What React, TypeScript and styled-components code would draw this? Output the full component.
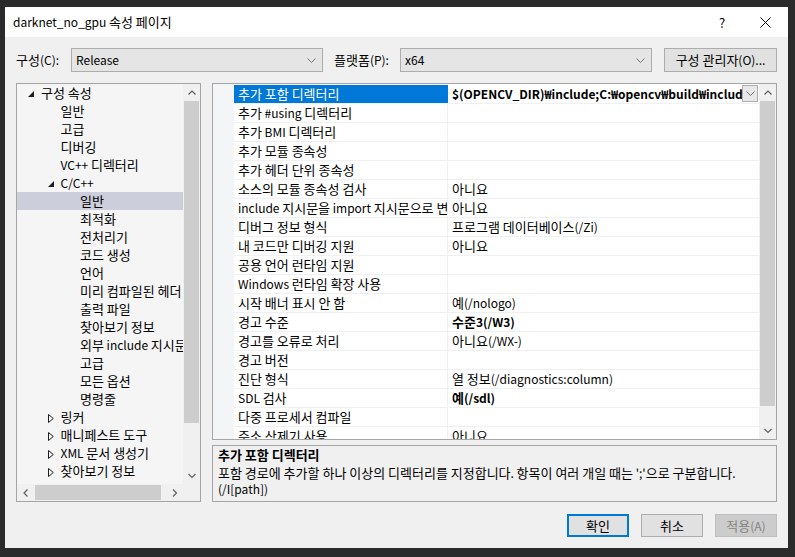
import React from "react";
import styled, { createGlobalStyle, css } from "styled-components";

const FONT = `"Noto Sans CJK KR", "Noto Sans", sans-serif`;

const GlobalStyle = createGlobalStyle`
  html, body { margin: 0; padding: 0; background: #2b2b2b; }
  body { font-family: ${FONT}; font-size: 12px; color: #000; }
  * { box-sizing: border-box; }
`;

const Hangul = styled.span`
  font-size: 1.0834em;
`;

const HANGUL_RUN = /([\u1100-\u11FF\u3130-\u318F\uAC00-\uD7AF]+(?: +[\u1100-\u11FF\u3130-\u318F\uAC00-\uD7AF]+)*)/;

const T = ({ children }: { children: string }) => {
  const parts = children.split(HANGUL_RUN);
  return (
    <span>
      {parts.map((part, i) =>
        i % 2 === 1 ? <Hangul key={i}>{part}</Hangul> : <React.Fragment key={i}>{part}</React.Fragment>
      )}
    </span>
  );
};

const Screen = styled.div`
  width: 795px;
  height: 557px;
  padding: 7px 7px 9px 5px;
  background: #2b2b2b;
`;

const Dialog = styled.div`
  width: 783px;
  height: 541px;
  display: flex;
  flex-direction: column;
  background: #f0f0f0;
`;

const TitleBar = styled.div`
  height: 30px;
  flex: none;
  background: #ffffff;
  display: flex;
  align-items: center;
  padding-left: 8px;
`;

const TitleText = styled.div`
  flex: 1;
  font-size: 12px;
  line-height: 16px;
  white-space: nowrap;
`;

const TitleButton = styled.div<{ $shift?: number }>`
  width: 46px;
  height: 30px;
  display: flex;
  align-items: center;
  justify-content: center;
  padding-left: ${(p) => p.$shift ?? 0}px;
  font-size: 13px;
  color: #000;
`;

const Body = styled.div`
  flex: 1;
  display: flex;
  flex-direction: column;
  padding: 11px 11px 11px 11px;
`;

const ToolbarRow = styled.div`
  height: 24px;
  display: flex;
  align-items: center;
  flex: none;
`;

const Label = styled.div<{ $width: number; $gap?: number }>`
  width: ${(p) => p.$width}px;
  margin-left: ${(p) => p.$gap ?? 0}px;
  white-space: nowrap;
  line-height: 16px;
`;

const Combo = styled.div`
  width: 252px;
  height: 24px;
  border: 1px solid #adadad;
  background: #e5e5e5;
  display: flex;
  align-items: center;
  padding-left: 4px;
  padding-right: 6px;
`;

const ComboText = styled.div`
  flex: 1;
  line-height: 16px;
`;

const PushButton = styled.div`
  width: 113px;
  height: 24px;
  margin-left: 12px;
  border: 1px solid #adadad;
  background: #e1e1e1;
  display: flex;
  align-items: center;
  justify-content: center;
  line-height: 16px;
  white-space: nowrap;
`;

const MainArea = styled.div`
  margin-top: 11px;
  height: 419px;
  display: flex;
  gap: 11px;
  flex: none;
`;

const TreePanel = styled.div`
  width: 185px;
  height: 419px;
  border: 1px solid #a5a5a5;
  background: #f5f5f5;
  display: grid;
  grid-template-columns: 166px 17px;
  grid-template-rows: 400px 17px;
`;

const TreeContent = styled.div`
  overflow: hidden;
`;

const TreeRow = styled.div<{ $level: number; $selected?: boolean }>`
  height: 18px;
  display: flex;
  align-items: center;
  padding-left: ${(p) => 11 + p.$level * 19.5}px;
  white-space: nowrap;
  line-height: 16px;
  ${(p) =>
    p.$selected &&
    css`
      background: #cccedb;
    `}
`;

const Expander = styled.div`
  width: 13px;
  flex: none;
  display: flex;
  align-items: center;
  padding-top: 2px;
`;

const Corner = styled.div`
  background: #f0f0f0;
`;

const VScroll = styled.div`
  background: #f0f0f0;
  display: flex;
  flex-direction: column;
  align-items: center;
`;

const HScroll = styled.div`
  background: #f0f0f0;
  display: flex;
  align-items: center;
`;

const ArrowBox = styled.div`
  width: 17px;
  height: 17px;
  flex: none;
  display: flex;
  align-items: center;
  justify-content: center;
`;

const VTrack = styled.div`
  flex: 1;
  width: 100%;
  display: flex;
  flex-direction: column;
  align-items: center;
`;

const HTrack = styled.div`
  flex: 1;
  height: 100%;
  display: flex;
  align-items: center;
`;

const VThumb = styled.div<{ $len: number }>`
  width: 15px;
  height: ${(p) => p.$len}px;
  background: #cdcdcd;
`;

const HThumb = styled.div<{ $len: number }>`
  height: 15px;
  width: ${(p) => p.$len}px;
  margin-left: 1px;
  background: #cdcdcd;
`;

const RightColumn = styled.div`
  flex: 1;
  display: flex;
  flex-direction: column;
  gap: 5px;
`;

const PropertyGrid = styled.div`
  height: 357px;
  border: 1px solid #a5a5a5;
  background: #ffffff;
  display: flex;
  flex: none;
`;

const Gutter = styled.div`
  width: 21px;
  flex: none;
  background: #f4f5f7;
`;

const Rows = styled.div`
  flex: 1;
  overflow: hidden;
  padding-top: 1px;
`;

const PropRow = styled.div`
  display: grid;
  grid-template-columns: 214px 1fr;
  height: 19px;
  border-bottom: 1px solid #eff0f2;
`;

const NameCell = styled.div<{ $selected?: boolean }>`
  padding-left: 4px;
  border-right: 1px solid #eff0f2;
  white-space: nowrap;
  overflow: hidden;
  line-height: 18px;
  ${(p) =>
    p.$selected &&
    css`
      background: #0078d7;
      color: #ffffff;
      border-right-color: #0078d7;
    `}
`;

const ValueCell = styled.div`
  display: flex;
  align-items: flex-start;
  padding-left: 4px;
  min-width: 0;
`;

const ValueText = styled.div<{ $bold?: boolean }>`
  flex: 1;
  min-width: 0;
  white-space: nowrap;
  overflow: hidden;
  line-height: 18px;
  font-weight: ${(p) => (p.$bold ? 700 : 400)};
`;

const ValueDrop = styled.div`
  width: 16px;
  height: 17px;
  flex: none;
  margin-right: 1px;
  border: 1px solid #adadad;
  background: #e8e8e8;
  display: flex;
  align-items: center;
  justify-content: center;
`;

const DescPanel = styled.div`
  height: 57px;
  border: 1px solid #a5a5a5;
  background: #f0f0f0;
  padding: 1px 5px 0 5px;
  line-height: 16.5px;
`;

const DescTitle = styled.div`
  font-weight: 700;
  margin-bottom: 1px;
`;

const FooterRow = styled.div`
  margin-top: 12px;
  height: 23px;
  display: flex;
  justify-content: flex-end;
  gap: 12px;
`;

const DialogButton = styled.div<{ $variant?: "default" | "normal" | "disabled" }>`
  width: 62px;
  height: 23px;
  display: flex;
  align-items: center;
  justify-content: center;
  line-height: 16px;
  background: #e1e1e1;
  border: 1px solid #adadad;
  ${(p) =>
    p.$variant === "default" &&
    css`
      border: 2px solid #0078d7;
    `}
  ${(p) =>
    p.$variant === "disabled" &&
    css`
      background: #cccccc;
      border-color: #bfbfbf;
      color: #838383;
    `}
`;

const Chevron = ({ dir, color = "#606060" }: { dir: "up" | "down" | "left" | "right"; color?: string }) => {
  const pts: Record<string, string> = {
    up: "0.5,4.5 4,1 7.5,4.5",
    down: "0.5,1 4,4.5 7.5,1",
    left: "4.5,0.5 1,4 4.5,7.5",
    right: "1,0.5 4.5,4 1,7.5",
  };
  const vertical = dir === "up" || dir === "down";
  return (
    <svg width={vertical ? 8 : 6} height={vertical ? 6 : 8} viewBox={vertical ? "0 0 8 6" : "0 0 6 8"}>
      <polyline points={pts[dir]} fill="none" stroke={color} strokeWidth="1.2" />
    </svg>
  );
};

const ComboArrow = () => (
  <svg width="9" height="5" viewBox="0 0 9 5">
    <polyline points="0.5,0.5 4.5,4.5 8.5,0.5" fill="none" stroke="#707070" strokeWidth="1" />
  </svg>
);

const ExpandedIcon = () => (
  <svg width="6" height="6" viewBox="0 0 6 6">
    <polygon points="6,0 6,6 0,6" fill="#1e1e1e" />
  </svg>
);

const CollapsedIcon = () => (
  <svg width="6" height="9" viewBox="0 0 6 9">
    <polygon points="0.5,0.5 5.3,4.5 0.5,8.5" fill="none" stroke="#1e1e1e" strokeWidth="1" />
  </svg>
);

const CloseIcon = () => (
  <svg width="11" height="11" viewBox="0 0 11 11">
    <line x1="0.5" y1="0.5" x2="10.5" y2="10.5" stroke="#000" strokeWidth="1" />
    <line x1="10.5" y1="0.5" x2="0.5" y2="10.5" stroke="#000" strokeWidth="1" />
  </svg>
);

type TreeItem = { label: string; level: number; expander?: "open" | "closed"; selected?: boolean };

const treeItems: TreeItem[] = [
  { label: "구성 속성", level: 0, expander: "open" },
  { label: "일반", level: 1 },
  { label: "고급", level: 1 },
  { label: "디버깅", level: 1 },
  { label: "VC++ 디렉터리", level: 1 },
  { label: "C/C++", level: 1, expander: "open" },
  { label: "일반", level: 2, selected: true },
  { label: "최적화", level: 2 },
  { label: "전처리기", level: 2 },
  { label: "코드 생성", level: 2 },
  { label: "언어", level: 2 },
  { label: "미리 컴파일된 헤더", level: 2 },
  { label: "출력 파일", level: 2 },
  { label: "찾아보기 정보", level: 2 },
  { label: "외부 include 지시문", level: 2 },
  { label: "고급", level: 2 },
  { label: "모든 옵션", level: 2 },
  { label: "명령줄", level: 2 },
  { label: "링커", level: 1, expander: "closed" },
  { label: "매니페스트 도구", level: 1, expander: "closed" },
  { label: "XML 문서 생성기", level: 1, expander: "closed" },
  { label: "찾아보기 정보", level: 1, expander: "closed" },
];

type Prop = { name: string; value?: string; bold?: boolean; selected?: boolean };

const props: Prop[] = [
  { name: "추가 포함 디렉터리", value: "$(OPENCV_DIR)₩include;C:₩opencv₩build₩include", bold: true, selected: true },
  { name: "추가 #using 디렉터리" },
  { name: "추가 BMI 디렉터리" },
  { name: "추가 모듈 종속성" },
  { name: "추가 헤더 단위 종속성" },
  { name: "소스의 모듈 종속성 검사", value: "아니요" },
  { name: "include 지시문을 import 지시문으로 변환", value: "아니요" },
  { name: "디버그 정보 형식", value: "프로그램 데이터베이스(/Zi)" },
  { name: "내 코드만 디버깅 지원", value: "아니요" },
  { name: "공용 언어 런타임 지원" },
  { name: "Windows 런타임 확장 사용" },
  { name: "시작 배너 표시 안 함", value: "예(/nologo)" },
  { name: "경고 수준", value: "수준3(/W3)", bold: true },
  { name: "경고를 오류로 처리", value: "아니요(/WX-)" },
  { name: "경고 버전" },
  { name: "진단 형식", value: "열 정보(/diagnostics:column)" },
  { name: "SDL 검사", value: "예(/sdl)", bold: true },
  { name: "다중 프로세서 컴파일" },
  { name: "주소 삭제기 사용", value: "아니요" },
];

export default function App() {
  return (
    <>
      <GlobalStyle />
      <Screen>
        <Dialog>
          <TitleBar>
            <TitleText>
              <T>darknet_no_gpu 속성 페이지</T>
            </TitleText>
            <TitleButton $shift={6}>?</TitleButton>
            <TitleButton>
              <CloseIcon />
            </TitleButton>
          </TitleBar>
          <Body>
            <ToolbarRow>
              <Label $width={55}>
                <T>구성(C):</T>
              </Label>
              <Combo>
                <ComboText>Release</ComboText>
                <ComboArrow />
              </Combo>
              <Label $width={66} $gap={11}>
                <T>플랫폼(P):</T>
              </Label>
              <Combo>
                <ComboText>x64</ComboText>
                <ComboArrow />
              </Combo>
              <PushButton>
                <T>구성 관리자(O)...</T>
              </PushButton>
            </ToolbarRow>
            <MainArea>
              <TreePanel>
                <TreeContent>
                  {treeItems.map((it, i) => (
                    <TreeRow key={i} $level={it.level} $selected={it.selected}>
                      <Expander>
                        {it.expander === "open" && <ExpandedIcon />}
                        {it.expander === "closed" && <CollapsedIcon />}
                      </Expander>
                      <T>{it.label}</T>
                    </TreeRow>
                  ))}
                </TreeContent>
                <VScroll>
                  <ArrowBox>
                    <Chevron dir="up" />
                  </ArrowBox>
                  <VTrack>
                    <VThumb $len={322} />
                  </VTrack>
                  <ArrowBox>
                    <Chevron dir="down" />
                  </ArrowBox>
                </VScroll>
                <HScroll>
                  <ArrowBox>
                    <Chevron dir="left" />
                  </ArrowBox>
                  <HTrack>
                    <HThumb $len={126} />
                  </HTrack>
                  <ArrowBox>
                    <Chevron dir="right" />
                  </ArrowBox>
                </HScroll>
                <Corner />
              </TreePanel>
              <RightColumn>
                <PropertyGrid>
                  <Gutter />
                  <Rows>
                    {props.map((p, i) => (
                      <PropRow key={i}>
                        <NameCell $selected={p.selected}>
                          <T>{p.name}</T>
                        </NameCell>
                        <ValueCell>
                          <ValueText $bold={p.bold}>
                            <T>{p.value ?? ""}</T>
                          </ValueText>
                          {p.selected && (
                            <ValueDrop>
                              <ComboArrow />
                            </ValueDrop>
                          )}
                        </ValueCell>
                      </PropRow>
                    ))}
                  </Rows>
                  <VScroll>
                    <ArrowBox>
                      <Chevron dir="up" />
                    </ArrowBox>
                    <VTrack>
                      <VThumb $len={305} />
                    </VTrack>
                    <ArrowBox>
                      <Chevron dir="down" />
                    </ArrowBox>
                  </VScroll>
                </PropertyGrid>
                <DescPanel>
                  <DescTitle>
                    <T>추가 포함 디렉터리</T>
                  </DescTitle>
                  <div>
                    <T>포함 경로에 추가할 하나 이상의 디렉터리를 지정합니다. 항목이 여러 개일 때는 ';'으로 구분합니다.</T>
                  </div>
                  <div>(/I[path])</div>
                </DescPanel>
              </RightColumn>
            </MainArea>
            <FooterRow>
              <DialogButton $variant="default">
                <T>확인</T>
              </DialogButton>
              <DialogButton>
                <T>취소</T>
              </DialogButton>
              <DialogButton $variant="disabled">
                <T>적용(A)</T>
              </DialogButton>
            </FooterRow>
          </Body>
        </Dialog>
      </Screen>
    </>
  );
}
